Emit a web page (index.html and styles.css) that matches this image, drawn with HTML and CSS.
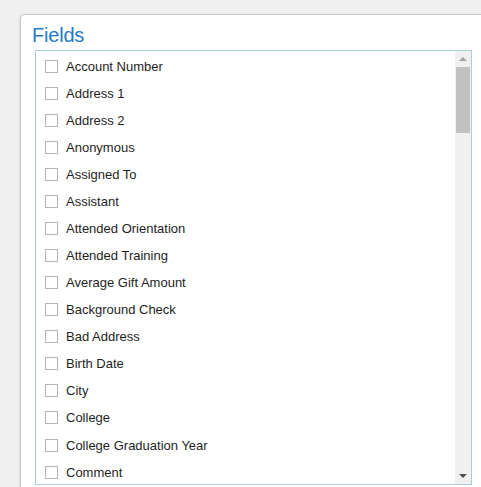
FILE: index.html
```html
<!DOCTYPE html>
<html lang="en">
<head>
    <meta charset="UTF-8">
    <title>Fields</title>
    <link rel="stylesheet" href="styles.css">
</head>
<body>
    <div class="panel">
        <h2 class="panel-title">Fields</h2>
        <div class="listbox">
            <ul class="field-list">
                <li><span class="check"></span>Account Number</li>
                <li><span class="check"></span>Address 1</li>
                <li><span class="check"></span>Address 2</li>
                <li><span class="check"></span>Anonymous</li>
                <li><span class="check"></span>Assigned To</li>
                <li><span class="check"></span>Assistant</li>
                <li><span class="check"></span>Attended Orientation</li>
                <li><span class="check"></span>Attended Training</li>
                <li><span class="check"></span>Average Gift Amount</li>
                <li><span class="check"></span>Background Check</li>
                <li><span class="check"></span>Bad Address</li>
                <li><span class="check"></span>Birth Date</li>
                <li><span class="check"></span>City</li>
                <li><span class="check"></span>College</li>
                <li><span class="check"></span>College Graduation Year</li>
                <li><span class="check"></span>Comment</li>
            </ul>
            <div class="scrollbar">
                <span class="arrow arrow-up"></span>
                <div class="track">
                    <div class="thumb"></div>
                </div>
                <span class="arrow arrow-down"></span>
            </div>
        </div>
    </div>
</body>
</html>
```

FILE: styles.css
```css
body {
    margin: 0;
    padding: 14px 0 0 20px;
    background-color: #f0f0f0;
    font-family: 'Liberation Sans', Arial, sans-serif;
    overflow: hidden;
    height: 487px;
    box-sizing: border-box;
}

.panel {
    width: 480px;
    height: 490px;
    background-color: #fff;
    border: 1px solid #c8c8c8;
    border-right: none;
    border-radius: 5px 0 0 0;
    box-shadow: -1px 0 2px rgba(0, 0, 0, 0.08);
    padding: 0 0 0 11px;
    box-sizing: border-box;
}

.panel-title {
    margin: 0;
    padding: 8px 0 0 0;
    height: 35px;
    box-sizing: border-box;
    font-size: 20px;
    font-weight: normal;
    color: #1f7bc6;
    line-height: 24px;
    letter-spacing: -0.2px;
}

.listbox {
    display: flex;
    width: 437px;
    height: 435px;
    margin-left: 3px;
    border: 1px solid #a9cfd5;
    box-sizing: border-box;
    overflow: hidden;
}

.field-list {
    flex: 1;
    list-style: none;
    margin: 0;
    padding: 1.6px 0 0 9px;
    overflow: hidden;
}

.field-list li {
    display: flex;
    align-items: center;
    height: 27.07px;
    font-size: 13px;
    color: #1e1e1e;
}

.check {
    width: 13px;
    height: 13px;
    border: 1px solid #b4b4b4;
    box-sizing: border-box;
    margin-right: 8px;
    background-color: #fff;
}

.scrollbar {
    width: 16px;
    display: flex;
    flex-direction: column;
    align-items: center;
    background-color: #f0f0f0;
}

.arrow {
    width: 0;
    height: 0;
    border-left: 4px solid transparent;
    border-right: 4px solid transparent;
    margin: 6px 0;
}

.arrow-up {
    border-bottom: 4px solid #a3a3a3;
}

.arrow-down {
    border-top: 4px solid #505050;
}

.track {
    flex: 1;
    width: 100%;
    padding: 0 1px;
    box-sizing: border-box;
}

.thumb {
    height: 66px;
    background-color: #c1c1c1;
}
```
